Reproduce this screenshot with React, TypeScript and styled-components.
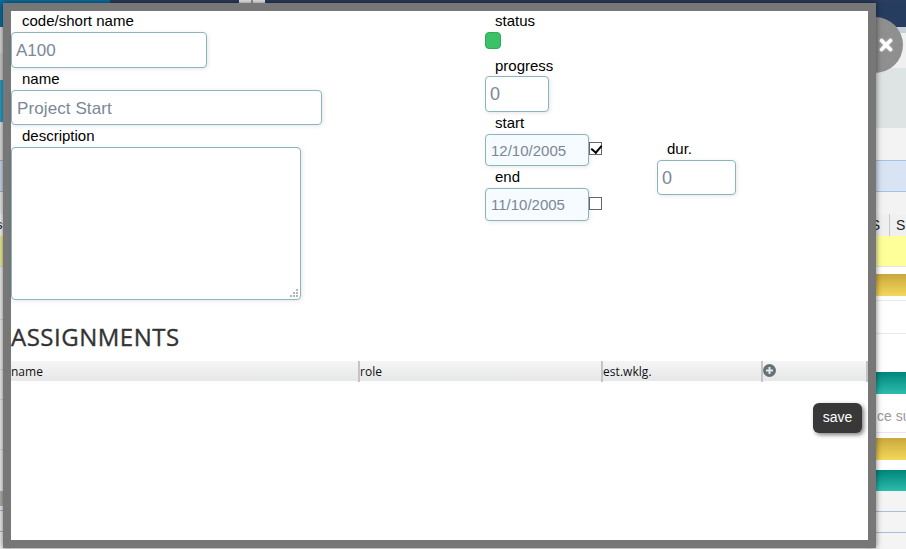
import React from "react";
import styled, { createGlobalStyle } from "styled-components";

const Global = createGlobalStyle`
  html, body { margin: 0; padding: 0; background: #fff; overflow: hidden; }
  * { box-sizing: border-box; }
  body { font-family: "Liberation Sans", Arial, sans-serif; }
`;

const Page = styled.div`
  position: relative;
  width: 906px;
  height: 549px;
  overflow: hidden;
  display: flex;
  flex-direction: column;
`;

const TopStrip = styled.div`
  height: 3px;
  flex: none;
  display: flex;
  background: #2a3d5c;
`;
const TopBlue = styled.div`
  width: 110px;
  background: #0e6ea0;
`;
const TopTab = styled.div`
  width: 26px;
  margin-left: 129px;
  background: linear-gradient(90deg, #eee 0 48%, #999 48% 52%, #eee 52%);
`;

const Rails = styled.div`
  flex: 1;
  display: flex;
  justify-content: space-between;
`;
const Rail = styled.div<{ $w: number }>`
  width: ${(p) => p.$w}px;
  display: flex;
  flex-direction: column;
  overflow: hidden;
`;
const Band = styled.div<{ $h: number; $bg: string; $line?: string }>`
  height: ${(p) => p.$h}px;
  flex: none;
  background: ${(p) => p.$bg};
  ${(p) => (p.$line ? `border-top: 1px solid ${p.$line};` : "")}
`;
const ClippedText = styled.div<{ $h: number }>`
  height: ${(p) => p.$h}px;
  flex: none;
  display: flex;
  align-items: center;
  font-size: 14px;
  white-space: nowrap;
  color: #9a9a9a;
  padding-left: 11px;
  justify-content: flex-start;
`;
const LeftS = styled.div`
  height: 22px;
  flex: none;
  font-size: 13px;
  line-height: 22px;
  color: #111;
  margin-left: -4px;
  background: #fafafa;
`;
const HeadRow = styled.div`
  height: 22px;
  flex: none;
  display: flex;
  background: #f0f0f0;
  font-size: 14px;
  color: #222;
  line-height: 22px;
`;
const HeadCell = styled.div<{ $w: number }>`
  width: ${(p) => p.$w}px;
  flex: none;
  text-align: right;
  padding-right: 9px;
  border-right: 1px solid #c8c8c8;
`;
const LastCell = styled.div`
  padding-left: 6px;
`;

const CloseCircle = styled.div`
  position: absolute;
  left: 847px;
  top: 17px;
  width: 56px;
  height: 56px;
  border-radius: 50%;
  background: #8f8f8f;
`;
const CloseIcon = styled.svg`
  position: absolute;
  left: 32px;
  top: 21px;
  width: 14px;
  height: 14px;
  filter: drop-shadow(0 0 1px rgba(255, 255, 255, 0.6));
`;

const Modal = styled.div`
  position: absolute;
  left: 3px;
  top: 3px;
  width: 873px;
  height: 545px;
  border: 8px solid #777;
  background: #fff;
  box-shadow: 0 0 6px rgba(0, 0, 0, 0.55);
  display: flex;
  flex-direction: column;
`;

const FormGrid = styled.div`
  display: grid;
  grid-template-columns: 474px 1fr;
`;
const Column = styled.div`
  display: flex;
  flex-direction: column;
`;
const Label = styled.label<{ $h?: number; $lh?: number }>`
  display: block;
  height: ${(p) => p.$h ?? 22}px;
  padding-left: 11px;
  font-size: 15px;
  line-height: ${(p) => p.$lh ?? 22}px;
  color: #000;
`;
const SideLabel = styled(Label)`
  padding-left: 10px;
`;
const TextInput = styled.input<{ $w: number; $h: number; $fs?: number; $tint?: boolean }>`
  display: block;
  width: ${(p) => p.$w}px;
  height: ${(p) => p.$h}px;
  padding: 1px 4px 0;
  border: 1px solid #8ab5bd;
  border-radius: 4px;
  outline: none;
  background: ${(p) => (p.$tint ? "#f5fbff" : "#fff")};
  box-shadow: 1px 1px 4px rgba(0, 0, 0, 0.1);
  font-family: "Liberation Sans", Arial, sans-serif;
  font-size: ${(p) => p.$fs ?? 17}px;
  color: #7a8798;
`;
const DateInput = styled(TextInput)`
  padding: 0 5px;
`;
const NameInput = styled(TextInput)`
  padding: 2px 4px 0 5px;
  letter-spacing: 0.1px;
`;
const AreaWrap = styled.div`
  position: relative;
  width: 290px;
  height: 153px;
`;
const TextArea = styled.textarea`
  display: block;
  width: 100%;
  height: 100%;
  border: 1px solid #8ab5bd;
  border-radius: 4px;
  outline: none;
  background: #fff;
  box-shadow: 1px 1px 4px rgba(0, 0, 0, 0.1);
  resize: none;
`;
const Grip = styled.svg`
  position: absolute;
  right: 3px;
  bottom: 3px;
  width: 8px;
  height: 8px;
`;
const StatusDot = styled.div`
  width: 16px;
  height: 17px;
  border-radius: 4px;
  background: #3cc068;
  border: 1px solid #2fa85a;
  margin-bottom: 5px;
`;
const DatesRow = styled.div`
  display: flex;
`;
const DateCol = styled.div`
  width: 172px;
  display: flex;
  flex-direction: column;
`;
const DurCol = styled.div`
  margin-top: 27px;
  display: flex;
  flex-direction: column;
`;
const DateLine = styled.div`
  display: flex;
  align-items: center;
`;
const Check = styled.input<{ $shift: number }>`
  position: relative;
  width: 13px;
  height: 13px;
  margin: 0;
  appearance: none;
  border: 1px solid #666;
  background: #fff;
  transform: translateY(${(p) => p.$shift}px);
  &:checked::after {
    content: "";
    position: absolute;
    left: 3px;
    top: 0;
    width: 5px;
    height: 8px;
    border-right: 2px solid #000;
    border-bottom: 2px solid #000;
    transform: rotate(40deg);
  }
`;

const Heading = styled.h2`
  margin: 21px 0 8px;
  height: 32px;
  font-family: "Open Sans", sans-serif;
  font-size: 24px;
  font-weight: 500;
  line-height: 32px;
  color: #333;
  letter-spacing: 0.5px;
  -webkit-text-stroke: 0.35px #333;
`;
const TableHead = styled.div`
  flex: none;
  height: 20px;
  display: grid;
  grid-template-columns: 349px 243px 160px 105px;
  background: linear-gradient(#f5f5f5, #e6e7e8);
  font-family: "Open Sans", sans-serif;
  font-size: 12px;
  line-height: 21px;
  color: #111;
`;
const Th = styled.div`
  border-right: 2px solid #c4c4c4;
  white-space: nowrap;
`;
const ThLabel = styled(Th)`
  letter-spacing: 0.05px;
`;
const ThAdd = styled(Th)`
  display: flex;
  align-items: center;
`;
const AddIcon = styled.svg`
  width: 13px;
  height: 13px;
  margin-top: -2px;
`;
const ActionRow = styled.div`
  display: flex;
  justify-content: flex-end;
  padding: 22px 6px 0 0;
`;
const SaveButton = styled.button`
  width: 49px;
  height: 30px;
  padding: 0 0 2px;
  border: none;
  border-radius: 6px;
  background: #383838;
  color: #fff;
  font-family: "Liberation Sans", Arial, sans-serif;
  font-size: 14px;
  box-shadow: 2px 2px 4px rgba(0, 0, 0, 0.5);
`;

const gripDots = [
  [6, 0],
  [3, 3],
  [6, 3],
  [0, 6],
  [3, 6],
  [6, 6],
];

export default function App() {
  return (
    <>
      <Global />
      <Page>
        <TopStrip>
          <TopBlue />
          <TopTab />
        </TopStrip>
        <Rails>
          <Rail $w={11}>
            <Band $h={24} $bg="#0d6a9c" />
            <Band $h={26} $bg="#dcdcdc" />
            <Band $h={27} $bg="#d0d0d0" />
            <Band $h={42} $bg="#2aa0c8" />
            <Band $h={38} $bg="#e4e4e4" />
            <Band $h={31} $bg="#cfdcee" $line="#9ab8e0" />
            <Band $h={23} $bg="#efefef" $line="#9ab8e0" />
            <LeftS>s</LeftS>
            <Band $h={30} $bg="#f2f29a" />
            <Band $h={53} $bg="#f2f2f2" $line="#ddd" />
            <Band $h={50} $bg="#f2f2f2" $line="#ddd" />
            <Band $h={30} $bg="#f2f2f2" $line="#ddd" />
            <Band $h={50} $bg="#f2f2f2" $line="#ddd" />
            <Band $h={42} $bg="#f2f2f2" $line="#ddd" />
            <Band $h={15} $bg="#b5b5b5" />
            <Band $h={4} $bg="#f2f2f2" />
            <Band $h={21} $bg="#f2f2f2" $line="#9ab8e0" />
            <Band $h={20} $bg="#f2f2f2" $line="#9ab8e0" />
          </Rail>
          <Rail $w={40}>
            <Band $h={24} $bg="#263d60" />
            <Band $h={6} $bg="#c4d0da" />
            <Band $h={35} $bg="#f0f0f0" />
            <Band $h={60} $bg="#dde4e3" />
            <Band $h={32} $bg="#f3f3f3" />
            <Band $h={31} $bg="#d8e4f3" $line="#a4c2ea" />
            <Band $h={23} $bg="#f3f3f3" $line="#a4c2ea" />
            <HeadRow>
              <HeadCell $w={24}>S</HeadCell>
              <LastCell>S</LastCell>
            </HeadRow>
            <Band $h={30} $bg="#ffff99" />
            <Band $h={8} $bg="#fff" $line="#e4e4e4" />
            <Band $h={22} $bg="linear-gradient(#c9a83e, #f5d75a)" />
            <Band $h={4} $bg="#fff" />
            <Band $h={33} $bg="#fff" $line="#e8e8e8" />
            <Band $h={39} $bg="#fff" $line="#e8e8e8" />
            <Band $h={22} $bg="linear-gradient(#00857a, #2cbcae)" />
            <Band $h={5} $bg="#fff" />
            <ClippedText $h={33}>ce su</ClippedText>
            <Band $h={6} $bg="#fff" $line="#e8e8e8" />
            <Band $h={22} $bg="linear-gradient(#c9a83e, #f5d75a)" />
            <Band $h={10} $bg="#fff" />
            <Band $h={21} $bg="linear-gradient(#00857a, #2cbcae)" />
            <Band $h={20} $bg="#f4f4f4" />
            <Band $h={21} $bg="#f4f4f4" $line="#a9bedb" />
            <Band $h={17} $bg="#f4f4f4" $line="#a9bedb" />
          </Rail>
        </Rails>

        <CloseCircle>
          <CloseIcon viewBox="0 0 14 14">
            <path d="M2.5 2.5 L11.5 11.5 M11.5 2.5 L2.5 11.5" stroke="#fff" strokeWidth="3.6" strokeLinecap="round" />
          </CloseIcon>
        </CloseCircle>

        <Modal>
          <FormGrid>
            <Column>
              <Label $h={21} $lh={20}>code/short name</Label>
              <TextInput $w={196} $h={36} defaultValue="A100" />
              <Label>name</Label>
              <NameInput $w={311} $h={35} defaultValue="Project Start" />
              <Label>description</Label>
              <AreaWrap>
                <TextArea />
                <Grip viewBox="0 0 8 8">
                  {gripDots.map(([x, y]) => (
                    <rect key={`${x}-${y}`} x={x} y={y} width="2" height="2" fill="#b5b5b5" />
                  ))}
                </Grip>
              </AreaWrap>
            </Column>
            <Column>
              <SideLabel $h={21} $lh={20}>status</SideLabel>
              <StatusDot />
              <SideLabel $lh={24}>progress</SideLabel>
              <TextInput $w={64} $h={36} $fs={18} defaultValue="0" />
              <DatesRow>
                <DateCol>
                  <SideLabel>start</SideLabel>
                  <DateLine>
                    <DateInput $w={104} $h={32} $fs={15} $tint defaultValue="12/10/2005" />
                    <Check type="checkbox" defaultChecked $shift={-2} />
                  </DateLine>
                  <SideLabel>end</SideLabel>
                  <DateLine>
                    <DateInput $w={104} $h={33} $fs={15} $tint defaultValue="11/10/2005" />
                    <Check type="checkbox" $shift={-1} />
                  </DateLine>
                </DateCol>
                <DurCol>
                  <SideLabel $h={21} $lh={20}>dur.</SideLabel>
                  <TextInput $w={79} $h={35} $fs={18} defaultValue="0" />
                </DurCol>
              </DatesRow>
            </Column>
          </FormGrid>
          <Heading>ASSIGNMENTS</Heading>
          <TableHead>
            <Th>name</Th>
            <ThLabel>role</ThLabel>
            <ThLabel>est.wklg.</ThLabel>
            <ThAdd>
              <AddIcon viewBox="0 0 13 13">
                <circle cx="6.5" cy="6.5" r="6.5" fill="#667276" />
                <path d="M6.5 3 V10 M3 6.5 H10" stroke="#e4e8ea" strokeWidth="2" />
              </AddIcon>
            </ThAdd>
          </TableHead>
          <ActionRow>
            <SaveButton>save</SaveButton>
          </ActionRow>
        </Modal>
      </Page>
    </>
  );
}
